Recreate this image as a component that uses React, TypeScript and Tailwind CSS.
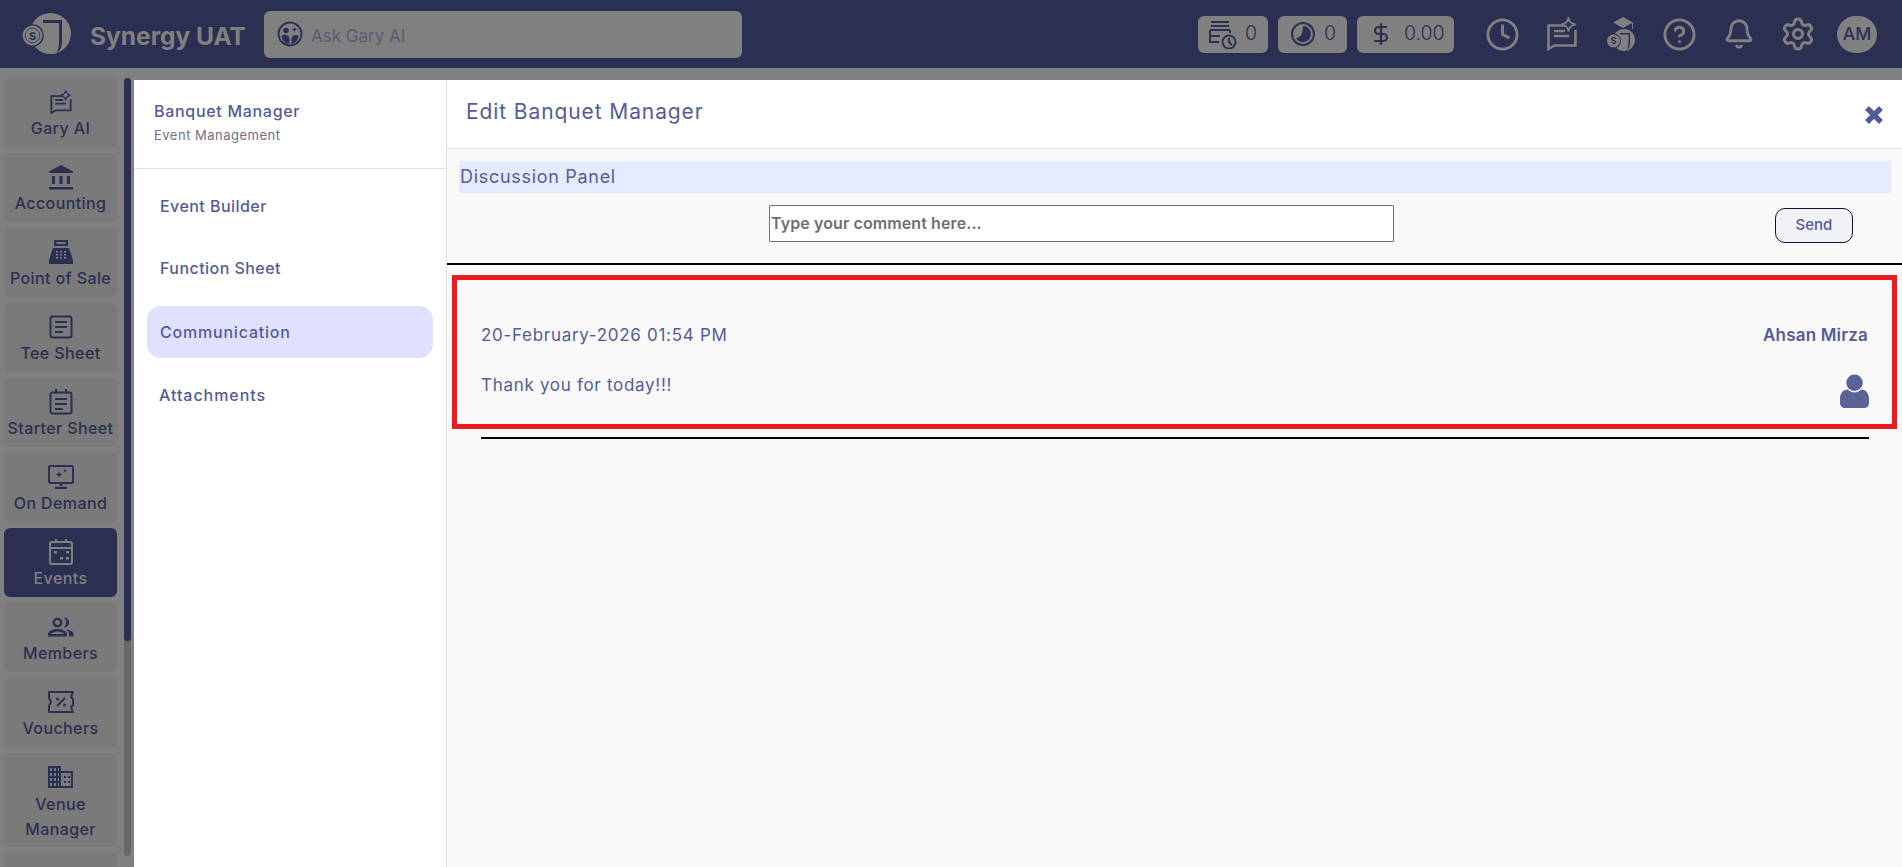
import type { ReactNode } from "react";
import { Clock, CircleHelp, Bell, Settings, DollarSign } from "lucide-react";

function Logo() {
  return (
    <svg viewBox="0 0 50 44" className="w-[50px] h-[44px] shrink-0" fill="#808080">
      <circle cx="29.500" cy="21.500" r="20.500" />
      <path d="M22 8 H41 V30 C41 35 39 39 36 41 C37 37 38 33 38 30 V11 H22 Z" fill="#2b2f51" />
      <circle cx="11.500" cy="23.500" r="11.300" fill="#2b2f51" />
      <circle cx="11.500" cy="23.500" r="10" />
      <circle cx="11.500" cy="23.500" r="7.300" fill="none" stroke="#2b2f51" strokeWidth="0.800" />
      <text x="11.500" y="27.500" textAnchor="middle" fontSize="11" fontWeight="700" fill="#2b2f51" fontFamily="Inter">S</text>
    </svg>
  );
}

function GaryChat({ c = "#2b2f51", w = 22, h = 25 }: { c?: string; w?: number; h?: number }) {
  return (
    <svg viewBox="0 0 30 35" width={w} height={h} fill="none" stroke={c} strokeWidth="2.600">
      <path d="M18 8.500 H1.500 V32 L7.500 28.500 H28.500 V13" />
      <path d="M7 14 H18 M7 19 H22" />
      <path d="M21.500 0.500 C22.200 4.500 23.500 6.300 28.500 7.500 C23.500 8.500 22.200 10.500 21.500 14.500 C20.800 10.500 19.500 8.500 14.500 7.500 C19.500 6.300 20.800 4.500 21.500 0.500 Z" strokeWidth="1.800" />
    </svg>
  );
}
function Bank() {
  return (
    <svg viewBox="0 0 26 26" width="26" height="26" fill="#2b2f51">
      <path d="M13 1 L25 7.500 V9 H1 V7.500 Z" />
      <rect x="4" y="12" width="3" height="8" />
      <rect x="11.500" y="12" width="3" height="8" />
      <rect x="19" y="12" width="3" height="8" />
      <rect x="1" y="23" width="24" height="2.500" />
    </svg>
  );
}
function Register() {
  return (
    <svg viewBox="0 0 26 26" width="26" height="26" fill="#2b2f51">
      <path d="M6 1 H20 V7 H6 Z M8.500 3 V5 H17.500 V3 Z" fillRule="evenodd" />
      <path d="M5 9 H21 L25 21 V25 H1 V21 Z" />
      <g fill="#808080">
        <rect x="8" y="12" width="2" height="1.500" /><rect x="12" y="12" width="2" height="1.500" /><rect x="16" y="12" width="2" height="1.500" />
        <rect x="8" y="15" width="2" height="1.500" /><rect x="12" y="15" width="2" height="1.500" /><rect x="16" y="15" width="2" height="1.500" />
        <rect x="8" y="18" width="2" height="1.500" /><rect x="12" y="18" width="2" height="1.500" /><rect x="16" y="18" width="2" height="1.500" />
      </g>
    </svg>
  );
}
function Sheet() {
  return (
    <svg viewBox="0 0 24 24" width="24" height="24" fill="none" stroke="#2b2f51" strokeWidth="2">
      <rect x="1.500" y="1.500" width="21" height="21" rx="2" />
      <path d="M6 7 H18 M6 12 H18 M6 17 H14" />
    </svg>
  );
}
function Starter() {
  return (
    <svg viewBox="0 0 24 26" width="24" height="26" fill="none" stroke="#2b2f51" strokeWidth="2">
      <rect x="1.500" y="3.500" width="21" height="21" rx="2" />
      <path d="M7 0 V5 M17 0 V5 M6 10 H18 M6 15 H18 M6 20 H14" />
    </svg>
  );
}
function Monitor() {
  return (
    <svg viewBox="0 0 26 24" width="26" height="24" fill="none" stroke="#2b2f51" strokeWidth="2">
      <rect x="1" y="1" width="24" height="17" rx="1.500" />
      <path d="M13 18 V21 M7 23 H19" strokeWidth="2.500" />
      <path d="M11 5.500 C11.300 8 12 8.800 14.500 9.500 C12 10 11.300 11 11 13.500 C10.700 11 10 10 7.500 9.500 C10 8.800 10.700 8 11 5.500 Z" fill="#2b2f51" stroke="none" />
      <path d="M17 3.500 C17.200 5 17.700 5.400 19 5.800 C17.700 6.200 17.200 6.800 17 8 C16.800 6.800 16.300 6.200 15 5.800 C16.300 5.400 16.800 5 17 3.500 Z" fill="#2b2f51" stroke="none" />
    </svg>
  );
}
function EventsIcon() {
  return (
    <svg viewBox="0 0 24 26" width="24" height="26" fill="none" stroke="#808080" strokeWidth="2">
      <rect x="1" y="3" width="22" height="22" rx="2" />
      <path d="M7 0 V4 M17 0 V4 M1 9 H23" />
      <g fill="#808080" stroke="none">
        <rect x="5" y="12" width="3" height="2.500" />
        <rect x="11" y="18" width="3" height="2.500" />
        <rect x="17" y="18" width="3" height="2.500" />
        <rect x="17" y="12" width="3" height="2.500" />
      </g>
    </svg>
  );
}
function MembersIcon() {
  return (
    <svg viewBox="0 0 26 20" width="26" height="20" fill="#2b2f51">
      <path d="M9.500 0.500 a5 5 0 1 0 0.001 0 Z M9.500 3 a2.500 2.500 0 1 1 -0.001 0 Z" fillRule="evenodd" />
      <path d="M16 0.500 c3 0 5 2.200 5 5 c0 2.800 -2 5 -5 5 c1.500 -1.500 2 -3 2 -5 c0 -2 -0.500 -3.500 -2 -5 Z" />
      <path d="M0 19.500 V17 C0 14 5 12 9.500 12 C14 12 19 14 19 17 V19.500 Z M3 17 H16 C15 15.500 12 14.500 9.500 14.500 C7 14.500 4 15.500 3 17 Z" fillRule="evenodd" />
      <path d="M18 12.500 C22 13 25.500 14.500 25.500 17 V19.500 H21 V17 C21 15 20 13.500 18 12.500 Z" />
    </svg>
  );
}
function Voucher() {
  return (
    <svg viewBox="0 0 26 22" width="26" height="22" fill="none" stroke="#2b2f51" strokeWidth="2">
      <path d="M1 1 H25 L23 6 L25 8 V14 L23 16 L25 21 H1 V15 L3 11 L1 7 Z" strokeLinejoin="round" />
      <path d="M9 15 L17 7" />
      <circle cx="9.500" cy="8" r="1.500" fill="#2b2f51" stroke="none" />
      <circle cx="16.500" cy="14" r="1.500" fill="#2b2f51" stroke="none" />
    </svg>
  );
}
function Venue() {
  return (
    <svg viewBox="0 0 26 22" width="26" height="22" fill="#2b2f51">
      <path fillRule="evenodd" d="M0 0 H13 V5 H25 V22 H0 Z M2 2 V5 H4 V2 Z M6 2 V5 H8 V2 Z M10 2 V5 H11 V2 Z M2 7 V10 H4 V7 Z M6 7 V10 H8 V7 Z M10 7 V10 H11 V7 Z M2 12 V15 H4 V12 Z M6 12 V15 H8 V12 Z M10 12 V15 H11 V12 Z M2 17 V20 H4 V17 Z M6 17 V20 H8 V17 Z M10 17 V20 H11 V17 Z M13 7 V20 H23 V7 Z" />
      <rect x="16" y="10" width="2" height="2" /><rect x="20" y="10" width="2" height="2" />
      <rect x="16" y="15" width="2" height="2" /><rect x="20" y="15" width="2" height="2" />
    </svg>
  );
}
function GradLogo() {
  return (
    <svg viewBox="0 0 30 36" width="30" height="36" fill="#808080">
      <path d="M17 1 L27 6.500 L17 12 L7 6.500 Z" />
      <path d="M26 7 V13 H27 V7 Z" />
      <circle cx="18" cy="24" r="11" />
      <path d="M14 17 H24 V27 C24 30 23 32 21 34 C22 31 22.500 29 22.500 27 V18.500 H14 Z" fill="#2b2f51" />
      <circle cx="7.500" cy="25" r="7.500" fill="#2b2f51" />
      <circle cx="7.500" cy="25" r="6.500" />
      <text x="7.500" y="28" fontSize="8.500" fontWeight="700" textAnchor="middle" fill="#2b2f51" fontFamily="Inter">S</text>
    </svg>
  );
}

const items = [
  { label: "Gary AI", icon: <GaryChat /> },
  { label: "Accounting", icon: <Bank /> },
  { label: "Point of Sale", icon: <Register /> },
  { label: "Tee Sheet", icon: <Sheet /> },
  { label: "Starter Sheet", icon: <Starter /> },
  { label: "On Demand", icon: <Monitor /> },
  { label: "Events", icon: <EventsIcon />, active: true },
  { label: "Members", icon: <MembersIcon /> },
  { label: "Vouchers", icon: <Voucher /> },
];

function SideItem({ label, icon, active }: { label: string; icon: ReactNode; active?: boolean }) {
  return (
    <div className={`h-[69px] shrink-0 rounded-md flex flex-col items-center justify-end pb-[9px] gap-[3px] ${active ? "bg-[#2b2f51] text-[#808080]" : "bg-[#7a7a7a] text-[#2b2f51]"}`}>
      <div className="h-[26px] flex items-center justify-center">{icon}</div>
      <div className="text-[16px] leading-[20px] font-medium whitespace-nowrap tracking-[0.4px]">{label}</div>
    </div>
  );
}

function Sidebar() {
  return (
    <aside className="w-[134px] shrink-0 bg-[#808080] flex pt-[10px] pl-[4px] overflow-hidden">
      <div className="w-[113px] flex flex-col gap-[6px] shrink-0">
        {items.map((i) => (
          <SideItem key={i.label} {...i} />
        ))}
        <div className="h-[94px] shrink-0 rounded-md bg-[#7a7a7a] text-[#2b2f51] flex flex-col items-center pt-[13px]">
          <Venue />
          <div className="text-[16px] leading-[25px] font-medium text-center mt-[4px] tracking-[0.4px]">Venue<br />Manager</div>
        </div>
        <div className="h-[30px] shrink-0 rounded-md bg-[#7a7a7a]" />
      </div>
      <div className="w-[7px] ml-[7px] h-[778px] rounded bg-[#676767] shrink-0">
        <div className="h-[563px] rounded bg-[#2b2f51]" />
      </div>
    </aside>
  );
}

function Header() {
  return (
    <header className="h-[68px] shrink-0 bg-[#2b2f51] flex items-center pl-[21px] pr-[25px]">
      <Logo />
      <div className="ml-[19px] w-[174px] pt-[5px] text-[#808080] text-[24.500px] font-bold whitespace-nowrap">Synergy UAT</div>
      <div className="w-[478px] h-[47px] rounded-md bg-[#808080] flex items-center pl-[13px] gap-[8px] text-[#5c5c70] text-[17px]">
        <svg viewBox="0 0 26 26" width="26" height="26" fill="#2b2f51">
          <path fillRule="evenodd" d="M13 0.500 a12.500 12.500 0 1 0 0.001 0 Z M13 2.500 a10.500 10.500 0 1 1 -0.001 0 Z" />
          <circle cx="9" cy="9.500" r="2.800" />
          <path d="M17.500 5.500 C17.800 7.500 18.500 8.200 20.500 8.500 C18.500 8.900 17.800 9.600 17.500 11.500 C17.200 9.600 16.500 8.900 14.500 8.500 C16.500 8.200 17.200 7.500 17.500 5.500 Z" />
          <path d="M4.500 15 C7 12.500 12 13.500 12.500 18 V23 C8.500 23 5 19.500 4.500 15 Z" />
          <path d="M14.500 18 C15 14.500 19 13 21.500 15 C21 19 18.500 22 14.500 23 Z" />
        </svg>
        <span className="pt-[6px]">Ask Gary AI</span>
      </div>
      <div className="ml-auto flex items-center">
        <div className="w-[70px] h-[37px] rounded-md bg-[#808080] flex items-center pl-[10px] text-[#2b2f51] text-[19.500px] font-light gap-[7px]">
          <svg viewBox="0 0 30 30" width="30" height="30" fill="none" stroke="#2b2f51" strokeWidth="2">
            <path d="M3 3 H21 M3 7 H21 M2 11 H22 M2 11 V23 H11 M2 17 H12" />
            <path d="M22 11 V14" />
            <circle cx="21" cy="23" r="6.500" fill="#808080" />
            <path d="M21 19 V23 L24 26" />
          </svg>
          0
        </div>
        <div className="ml-[10px] w-[69px] h-[37px] rounded-md bg-[#808080] flex items-center pl-[13px] text-[#2b2f51] text-[19.500px] font-light gap-[9px]">
          <svg viewBox="0 0 24 24" width="24" height="24">
            <circle cx="12" cy="12" r="11" fill="none" stroke="#2b2f51" strokeWidth="2" />
            <path d="M12 4 A8 8 0 1 1 5 16 C10 16 12 11 12 4 Z" fill="#2b2f51" />
          </svg>
          0
        </div>
        <div className="ml-[10px] w-[97px] h-[37px] rounded-md bg-[#808080] flex items-center pl-[12px] text-[#2b2f51] text-[19.500px] font-light gap-[11px]">
          <DollarSign size={24} strokeWidth={2.200} color="#2b2f51" />
          0.00
        </div>
        <div className="ml-[19px] flex items-center text-[#808080]">
          <div className="w-[59px] flex justify-center"><Clock size={35} strokeWidth={2} /></div>
          <div className="w-[59px] flex justify-center"><GaryChat c="#808080" w={30} h={35} /></div>
          <div className="w-[59px] flex justify-center"><GradLogo /></div>
          <div className="w-[59px] flex justify-center"><CircleHelp size={35} strokeWidth={2} /></div>
          <div className="w-[59px] flex justify-center"><Bell size={32} strokeWidth={2.200} /></div>
          <div className="w-[59px] flex justify-center"><Settings size={36} strokeWidth={2} /></div>
        </div>
        <div className="ml-[10px] w-[40px] h-[37px] rounded-full bg-[#808080] text-[#2b2f51] text-[17.500px] font-medium flex items-center justify-center">AM</div>
      </div>
    </header>
  );
}

function Nav() {
  return (
    <nav className="w-[313px] shrink-0 border-r border-[#e2e2e2] bg-white">
      <div className="h-[89px] border-b border-[#e2e2e2] pl-[20px] pt-[20px]">
        <div className="text-[16px] leading-[20px] font-medium text-[#545c98] tracking-[0.7px] mt-[1px]">Banquet Manager</div>
        <div className="text-[13px] leading-[18px] mt-[5px] text-[#6e7087] tracking-[0.5px]">Event Management</div>
      </div>
      <div className="flex flex-col px-[13px] pt-[11px] text-[#545c98] text-[16px] font-medium tracking-[0.45px]">
        <div className="h-[52px] pl-[13px] flex items-center">Event Builder</div>
        <div className="h-[52px] mt-[10px] pl-[13px] flex items-center">Function Sheet</div>
        <div className="h-[52px] mt-[12px] pl-[13px] flex items-center rounded-[14px] bg-[#dfe1ff] tracking-[0.8px]">Communication</div>
        <div className="h-[52px] mt-[11px] pl-[12px] flex items-center tracking-[0.95px]">Attachments</div>
      </div>
    </nav>
  );
}

function Main() {
  return (
    <main className="flex-1 min-w-0 flex flex-col bg-[#f9f9f9] text-[#545c98]">
      <div className="h-[69px] shrink-0 bg-white border-b border-[#e2e2e2] flex items-center justify-between pl-[19px] pr-[18px]">
        <div className="text-[21px] font-normal mb-[5px] tracking-[0.9px]">Edit Banquet Manager</div>
        <svg viewBox="0 0 20 20" width="20" height="20" className="mt-[1px]" fill="none" stroke="#545c98" strokeWidth="5.500">
          <path d="M3 3 L17 17 M17 3 L3 17" />
        </svg>
      </div>
      <div className="ml-[12px] mr-[11px] mt-[12px] h-[32px] bg-[#e5ebff] pl-[1px] pb-[1px] flex items-center text-[18px] font-normal tracking-[0.7px]">Discussion Panel</div>
      <div className="h-[72px] shrink-0 flex border-b-2 border-black">
        <div className="ml-[322px] mt-[12px] w-[625px] h-[37px] bg-white border border-[#6f6f6f] rounded-[1px] flex items-center pl-[1px] pb-[1px] text-[16px] font-semibold text-[#6f6f6f] tracking-[0.1px]">Type your comment here...</div>
        <div className="ml-[381px] mt-[15px] w-[78px] h-[35px] bg-[#f0f2f8] border border-[#0e1230] rounded-[10px] flex items-center justify-center text-[15px] font-medium">Send</div>
      </div>
      <div className="mx-[5px] mt-[10px] h-[154px] border-[5px] border-[#ea1c24] px-[24px] pt-[46px] flex flex-col">
        <div className="flex justify-between items-center h-[20px]">
          <span className="text-[17px] font-normal tracking-[0.7px]">20-February-2026 01:54 PM</span>
          <span className="text-[17px] font-semibold tracking-[0.2px]">Ahsan Mirza</span>
        </div>
        <div className="flex justify-between mt-[22px] items-start">
          <span className="text-[17px] font-normal leading-[24px] mt-[5px] tracking-[0.7px]">Thank you for today!!!</span>
          <svg viewBox="0 0 30 36" width="29" height="35" fill="#5a6298" className="mt-[6px] mr-[-1px]">
            <circle cx="15" cy="9" r="8.500" />
            <path d="M0 30 V26 C0 20 3 16 8 16 C12 20 18 20 22 16 C27 16 30 20 30 26 V30 C30 33 28 35 26 35 H4 C2 35 0 33 0 30 Z" />
          </svg>
        </div>
      </div>
      <div className="ml-[34px] mr-[33px] mt-[8px] h-[2px] bg-black" />
    </main>
  );
}

export default function App() {
  return (
    <div className="w-[1902px] h-[867px] overflow-hidden flex flex-col font-['Inter','Noto_Sans',sans-serif] bg-[#808080]">
      <Header />
      <div className="flex-1 flex min-h-0">
        <Sidebar />
        <div className="flex-1 min-w-0 flex flex-col pt-[12px]">
          <div className="flex-1 min-h-0 flex">
            <Nav />
            <Main />
          </div>
        </div>
      </div>
    </div>
  );
}
